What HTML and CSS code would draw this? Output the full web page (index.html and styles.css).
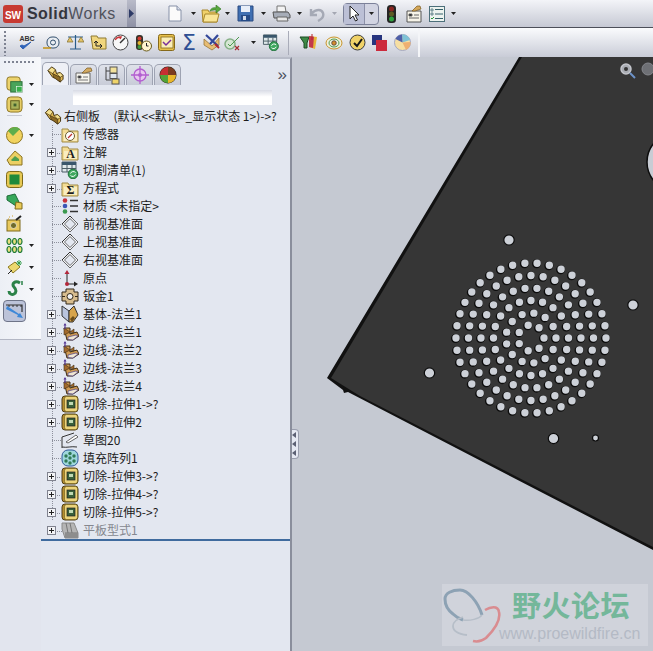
FILE: index.html
```html
<!DOCTYPE html>
<html lang="zh">
<head>
<meta charset="utf-8">
<title>SolidWorks</title>
<link rel="stylesheet" href="styles.css">
</head>
<body>
<svg class="defs" width="0" height="0">
  <defs>
    <symbol id="part" viewBox="0 0 18 18"><path d="M1 5 5 1l4 3 1 4 4-1 3 3v4l-3 3-5-4-3-1z" fill="#e3bb55" stroke="#3d2c0c"/><path d="M5 1 9 4 6 8 1 5zM10 8l4-1 3 3-3 2z" fill="#f4e08f" stroke="#3d2c0c" stroke-width=".7"/><path d="M6 8 7 12l7 5v-5z" fill="#8c6a26" stroke="#3d2c0c" stroke-width=".7"/></symbol>
    <symbol id="folder" viewBox="0 0 18 18"><path d="M1 4h6l1 2h9v11H1z" fill="#f3dc94" stroke="#a08a45"/><path d="M3 8h13v8H3z" fill="#f9edc0"/></symbol>
    <symbol id="sensor" viewBox="0 0 18 18"><use href="#folder"/><circle cx="9" cy="11" r="4.5" fill="#fff" stroke="#6b5b2a"/><path d="m7 13 4-4" stroke="#b33" stroke-width="1.2"/></symbol>
    <symbol id="cutlist" viewBox="0 0 18 18"><path d="M1 1h14v10H1z" fill="#dfe8ea" stroke="#4b5d66"/><path d="M1 1h14v3H1z" fill="#39566b"/><path d="M6 4v7M11 4v7M1 7.500h14" stroke="#4b5d66"/><circle cx="12" cy="13" r="4.800" fill="#3fa85f" stroke="#1f6f3a"/><path d="M9.500 12.500a3 3 0 0 1 5-1M14.500 13.500a3 3 0 0 1-5 1" fill="none" stroke="#fff"/></symbol>
    <symbol id="material" viewBox="0 0 18 18"><circle cx="4" cy="3.500" r="2.300" fill="#c8323a"/><circle cx="4" cy="9" r="2.300" fill="#3a55b5"/><circle cx="4" cy="14.500" r="2.300" fill="#3b9a50"/><path d="M9 3.500h8M9 9h8M9 14.500h8" stroke="#333" stroke-width="1.400"/></symbol>
    <symbol id="plane" viewBox="0 0 18 18"><path d="m9 1 8 8-8 8-8-8zM3.500 9 9 14.500 14.500 9 9 3.500z" fill="#f2f3f6" stroke="#444" stroke-width=".8"/><path d="m1 9 8-8 2 2" fill="none" stroke="#222" stroke-width=".8"/></symbol>
    <symbol id="origin" viewBox="0 0 18 18"><path d="M6 3v12h9" fill="none" stroke="#222"/><path d="m6 1 2.500 4h-5z" fill="#b3263a"/><path d="m17 15-4 2.500v-5z" fill="#222"/><circle cx="6" cy="15" r="2" fill="#b3263a"/></symbol>
    <symbol id="sheet" viewBox="0 0 18 18"><path d="M5 2h8v3h4v9h-4v3H5v-3H1V5h4z" fill="#d8bd8f" stroke="#33281a"/><circle cx="9" cy="9.500" r="3" fill="#f1f1f1" stroke="#33281a"/><path d="M1 9.500h3M14 9.500h3" stroke="#33281a"/></symbol>
    <symbol id="base" viewBox="0 0 18 18"><path d="M1 1 8 6v11L1 11z" fill="#b9c4de" stroke="#333"/><path d="m8 6 5-5 4 9-5 7H8z" fill="#d7a44c" stroke="#333"/><path d="m9 14 3-3 2 2-3 4z" fill="#6a4c1a"/></symbol>
    <symbol id="edge" viewBox="0 0 18 18"><path d="M3 5h6v6l7-2 2 4-6 4H6z" fill="#cf9a52" stroke="#3c2b14"/><path d="m3 5 6 4-6 3zM9 9l4-3v4z" fill="#a36a2c" stroke="#3c2b14" stroke-width=".6"/><path d="M4 6V1" stroke="#5a3c96" stroke-width="1.200"/><path d="M2.500 2.500 4 0l1.500 2.500z" fill="#5a3c96"/><path d="m7 14 8-2 2 1-5 4-5-.5z" fill="#efe6d2" stroke="#4b3f8a" stroke-width=".7"/></symbol>
    <symbol id="cut" viewBox="0 0 18 18"><rect x="1" y="1" width="16" height="16" rx="3" fill="#b58e30" stroke="#4e3d14"/><rect x="3.500" y="1.500" width="13" height="15" rx="2" fill="#ecd47a" stroke="#6a5818" stroke-width=".6"/><rect x="6" y="5" width="8" height="8" fill="#385f3a" stroke="#222" stroke-width=".7"/><rect x="8" y="7" width="4" height="3" fill="#c0d8b4"/></symbol>
    <symbol id="sketch" viewBox="0 0 18 18"><path d="M1 17V6l12-4" fill="none" stroke="#333"/><path d="M1 16c5 1 9-1 15 0" fill="none" stroke="#333"/><path d="m5 11 10-7 2 2-10 6z" fill="#fff" stroke="#444" stroke-width=".8"/></symbol>
    <symbol id="pattern" viewBox="0 0 18 18"><rect x="1" y="1" width="16" height="16" rx="6" fill="#9ed7dc" stroke="#2f5a9a"/><g fill="#2f7a55"><circle cx="9" cy="4.500" r="1.700"/><circle cx="5" cy="7" r="1.700"/><circle cx="13" cy="7" r="1.700"/><circle cx="9" cy="9" r="1.700"/><circle cx="5" cy="12" r="1.700"/><circle cx="13" cy="12" r="1.700"/><circle cx="9" cy="14" r="1.700"/></g></symbol>
    <symbol id="flat" viewBox="0 0 18 18"><path d="M1 2h12l4 10v5H4L1 8z" fill="#b5b5b5" stroke="#8a8a8a"/><path d="M5 2l2 10M9 2l2 10M4 12h13" stroke="#777" fill="none"/><path d="M4 12h13v5H4z" fill="#8d8d8d"/></symbol>
    <symbol id="caret" viewBox="0 0 5 3"><path d="M0 0h5L2.500 3z" fill="#222"/></symbol>
    <symbol id="extr" viewBox="0 0 18 18"><rect x="1" y="1" width="14" height="14" rx="3" fill="#ecd36e" stroke="#8c7420"/><rect x="5" y="6" width="12" height="11" fill="#49a45a" stroke="#2c6e3a"/><rect x="11" y="11" width="6" height="6" fill="#38b04c" stroke="#fff" stroke-width=".6"/></symbol>
    <symbol id="rev" viewBox="0 0 18 18"><rect x="1" y="1" width="16" height="16" rx="4" fill="#e8cf68" stroke="#8c7420"/><rect x="5" y="5" width="9" height="9" fill="#a9b25a" stroke="#5e5a1c"/><rect x="8" y="8" width="3" height="3" fill="#41622e"/></symbol>
  </defs>
</svg>

<header class="bar-top">
  <div class="logo">
    <svg class="logo-mark" viewBox="0 0 20 18"><rect width="20" height="18" rx="3" fill="#c73a32"/><text x="10" y="14" text-anchor="middle" class="logo-sw">SW</text></svg>
    <span class="logo-text"><b>Solid</b>Works</span>
  </div>
  <div class="logo-arrow"><svg width="5" height="9" viewBox="0 0 5 9"><path d="m0 0 5 4.500L0 9z" fill="#2d3a66"/></svg></div>
  <div class="top-icons">
    <span class="b w28"><svg width="14" height="17" viewBox="0 0 14 17"><path d="M1 1h8l4 4v11H1z" fill="#fbfbfb" stroke="#8791a8"/><path d="M9 1v4h4" fill="#d8deea" stroke="#8791a8"/></svg></span>
    <span class="c"><svg width="5" height="3"><use href="#caret"/></svg></span>
    <span class="b w25"><svg width="20" height="18" viewBox="0 0 20 18"><path d="M1 5h6l1 2h8v10H2z" fill="#f0d16a" stroke="#a8872c"/><path d="m2 17 2-8h14l-2 8z" fill="#f9e596" stroke="#a8872c"/><path d="M9 6c1-3 4-4 6-3V0l5 4-5 4V5c-2 0-4 0-6 1z" fill="#58a83e" stroke="#2f7320" stroke-width=".6"/></svg></span>
    <span class="c"><svg width="5" height="3"><use href="#caret"/></svg></span>
    <span class="b w27"><svg width="17" height="17" viewBox="0 0 17 17"><path d="M1 1h15v15H1z" fill="#3f6fb2" stroke="#2b4a80"/><path d="M4 1h9v6H4z" fill="#e8eef8"/><path d="M4 10h9v6H4z" fill="#254a86"/><path d="M6 11h3v4H6z" fill="#cfd9ea"/></svg></span>
    <span class="c"><svg width="5" height="3"><use href="#caret"/></svg></span>
    <span class="b w27"><svg width="19" height="17" viewBox="0 0 19 17"><path d="M5 1h8l1 6H5z" fill="#f3f3f3" stroke="#777"/><path d="M1 7h15l2 3v3H2z" fill="#a7adb8" stroke="#555"/><path d="M5 12h10l1 4H5z" fill="#e7e7e7" stroke="#666"/></svg></span>
    <span class="c"><svg width="5" height="3"><use href="#caret"/></svg></span>
    <span class="b w26"><svg width="18" height="16" viewBox="0 0 18 16"><path d="M3 3v6h6M3 9c2-5 10-7 12-2 1 3-1 6-5 8" fill="none" stroke="#a5a9b5" stroke-width="2.400"/></svg></span>
    <span class="c c-off"><svg width="5" height="3"><path d="M0 0h5L2.500 3z" fill="#a4a7b2"/></svg></span>
    <span class="select">
      <span class="select-main"><svg width="11" height="17" viewBox="0 0 11 17"><path d="M1 1v13l3-3 2.500 5 2-1-2.500-5h4z" fill="#fff" stroke="#222"/></svg></span>
      <span class="select-drop"><svg width="5" height="3"><use href="#caret"/></svg></span>
    </span>
    <span class="b w24"><svg width="9" height="18" viewBox="0 0 9 18"><rect width="9" height="18" rx="3.500" fill="#252525"/><circle cx="4.500" cy="4" r="2.500" fill="#8a2622"/><circle cx="4.500" cy="9" r="2.500" fill="#5c5a24"/><circle cx="4.500" cy="14" r="2.500" fill="#2fa23f"/></svg></span>
    <span class="b w22"><svg width="16" height="18" viewBox="0 0 16 18"><path d="M1 6h14v11H1z" fill="#f6f3e8" stroke="#555"/><path d="M3 9h3v2H3zM3 13h10M8 10h5" stroke="#666"/><path d="M6 6l5-5h3l1 3-6 2z" fill="#d4a75a" stroke="#7a5a20" stroke-width=".7"/></svg></span>
    <span class="b w23"><svg width="16" height="16" viewBox="0 0 16 16"><rect x=".5" y=".5" width="15" height="15" fill="#edf3ef" stroke="#4c6f7a"/><path d="M6 3.500h8M6 8h8M6 12.500h8" stroke="#34606a"/><path d="M2 3h2v2H2zM2 7h2v2H2z" fill="none" stroke="#34606a" stroke-width=".7"/><path d="m2 12 1 1 2-2" fill="none" stroke="#2a9a3a"/></svg></span>
    <span class="c c-last"><svg width="5" height="3"><use href="#caret"/></svg></span>
  </div>
</header>

<div class="bar-second">
  <div class="second-icons">
    <span class="grip"></span>
    <span class="s w25"><svg width="18" height="17" viewBox="0 0 18 17"><text x="9" y="7" text-anchor="middle" class="abc">ABC</text><path d="m2 12 3 3 8-7-7 4-2-1z" fill="#2f63b8" stroke="#2f63b8"/></svg></span>
    <span class="s w24"><svg width="18" height="16" viewBox="0 0 18 16"><rect x="5" y="2" width="12" height="11" rx="5" fill="#e9edf2" stroke="#33506e"/><circle cx="11" cy="7.500" r="2.500" fill="none" stroke="#33506e"/><path d="M1 13h8" stroke="#c5951f" stroke-width="1.600"/></svg></span>
    <span class="s w24"><svg width="17" height="17" viewBox="0 0 17 17"><path d="M8.500 1v14M1 3h15M3 15h11" stroke="#2a5d8a" stroke-width="1.200"/><path d="M0 8h6L3 3zM11 8h6l-3-5z" fill="#e3c46a" stroke="#7c6a2a" stroke-width=".7"/></svg></span>
    <span class="s w22"><svg width="17" height="15" viewBox="0 0 17 15"><path d="M1 1h6l1 2h8v11H3z" fill="#f0d67e" stroke="#8f7a32"/><path d="M6 6v5h6M10 9l2 2-2 2M4 8l2-2 2 2" fill="none" stroke="#222"/></svg></span>
    <span class="s w22"><svg width="17" height="17" viewBox="0 0 17 17"><circle cx="8.500" cy="8.500" r="7.500" fill="#f7f7f7" stroke="#444"/><path d="M3 6a6 6 0 0 1 6-3l-1 2" fill="none" stroke="#c9353a" stroke-width="1.500"/><path d="m8 9 5-5" stroke="#333" stroke-width="1.400"/></svg></span>
    <span class="s w24"><svg width="17" height="18" viewBox="0 0 17 18"><rect x="1" y="1" width="7" height="15" rx="3" fill="#34322a"/><circle cx="4.500" cy="4.500" r="2" fill="#d13b30"/><circle cx="4.500" cy="9" r="2" fill="#e0b22f"/><circle cx="4.500" cy="13" r="2" fill="#3f9a3e"/><circle cx="11.500" cy="12" r="5" fill="#fff6cf" stroke="#6a5a1a"/><path d="M11.500 9v3h2" stroke="#222" fill="none"/></svg></span>
    <span class="s w22"><svg width="17" height="17" viewBox="0 0 17 17"><rect x=".5" y=".5" width="16" height="16" rx="2" fill="#e8c14c" stroke="#86691a"/><rect x="3" y="3" width="12" height="11" fill="#fbeeb7" stroke="#86691a" stroke-width=".8"/><path d="m5 8 3 3 5-5" fill="none" stroke="#7a2f9a" stroke-width="1.500"/></svg></span>
    <span class="s w24 sigma">Σ</span>
    <span class="s w21"><svg width="18" height="17" viewBox="0 0 18 17"><path d="m1 5 8 7 7-8v7l-7 5-8-5z" fill="#e7bd75" stroke="#8e6c2b" stroke-width=".7"/><path d="M3 1l12 11M15 1 7 10" stroke="#34489a" stroke-width="2.200"/><path d="m12 10 4 4" stroke="#b5232c" stroke-width="1.800"/></svg></span>
    <span class="s w20"><svg width="17" height="16" viewBox="0 0 17 16"><circle cx="6" cy="9" r="5" fill="#d5e6d3" stroke="#85b085" stroke-width="1.500"/><path d="m4 9 2 2 9-9" fill="none" stroke="#4f9a50"/><path d="m11 11 4 4m0-4-4 4" stroke="#a52e33" stroke-width="1.200"/></svg></span>
    <span class="c c-second"><svg width="5" height="3"><use href="#caret"/></svg></span>
    <span class="s w19 table-btn"><svg width="18" height="17"><use href="#cutlist"/></svg></span>
    <span class="sep"></span>
    <span class="s w26"><svg width="19" height="17" viewBox="0 0 19 17"><path d="M1 3h9l-2 6v5H5V9z" fill="#3e8a46" stroke="#1c4a25"/><path d="m10 2 8 1-2 12-6-2z" fill="#e6b73a"/><path d="m10 2 5 .7L14 14l-4-1z" fill="#c33a4c"/><path d="M13 0v6" stroke="#b5232c"/></svg></span>
    <span class="s w25"><svg width="18" height="14" viewBox="0 0 18 14"><ellipse cx="9" cy="7" rx="8" ry="6" fill="#f1f2de" stroke="#c9952c"/><ellipse cx="9" cy="7" rx="5" ry="4" fill="none" stroke="#4d9a4f"/><circle cx="9" cy="7" r="2.300" fill="#d58b2e" stroke="#333" stroke-width=".7"/></svg></span>
    <span class="s w23"><svg width="17" height="17" viewBox="0 0 17 17"><circle cx="8.500" cy="8.500" r="7.500" fill="#f0d268" stroke="#3a3a3a"/><path d="m5 9 3 3 5-7" fill="none" stroke="#151515" stroke-width="2"/></svg></span>
    <span class="s w21"><svg width="15" height="16" viewBox="0 0 15 16"><rect width="10" height="10" fill="#27347e"/><rect x="4" y="5" width="11" height="11" fill="#cc2a3c"/></svg></span>
    <span class="s w25"><svg width="17" height="17" viewBox="0 0 17 17"><circle cx="8.500" cy="8.500" r="8" fill="#f7dfa2" stroke="#a3a7c3"/><path d="M8.500 8.500 16 6a8 8 0 0 0-8-5.500z" fill="#7fc2d6"/><path d="M8.500 8.500 1.500 5a8 8 0 0 1 6.500-4.500z" fill="#4e5fa8"/><path d="M8.500 8.500 12 16a8 8 0 0 0 4.500-8z" fill="#eeb071"/></svg></span>
  </div>
  <div class="second-rest"></div>
</div>

<main class="work">
  <aside class="palette-col">
    <nav class="palette">
      <div class="pal-grip"></div>
      <div class="pal-item pal-first"><svg width="17" height="17"><use href="#extr"/></svg><svg class="pal-caret" width="5" height="3"><use href="#caret"/></svg></div>
      <div class="pal-item pal-gap"><svg width="17" height="17"><use href="#rev"/></svg><svg class="pal-caret" width="5" height="3"><use href="#caret"/></svg></div>
      <div class="pal-item"><svg width="17" height="17" viewBox="0 0 17 17"><circle cx="8.500" cy="8.500" r="8" fill="#f1d35f" stroke="#8f7620"/><path d="M2 4a8 8 0 0 1 12-2L7 9z" fill="#5fae4c"/></svg><svg class="pal-caret" width="5" height="3"><use href="#caret"/></svg></div>
      <div class="pal-item"><svg width="17" height="17" viewBox="0 0 17 17"><path d="m1 11 8-9 7 6v8H4z" fill="#ecd064" stroke="#8b7320"/><path d="m5 11 4-4 4 3v2H6z" fill="#4f9f50"/></svg></div>
      <div class="pal-item"><svg width="17" height="17" viewBox="0 0 17 17"><rect x=".5" y=".5" width="16" height="16" rx="3" fill="#e7c954" stroke="#7f6a1a"/><rect x="3.500" y="3.500" width="10" height="10" fill="#1f8a3a"/></svg></div>
      <div class="pal-item"><svg width="17" height="17" viewBox="0 0 17 17"><path d="M1 3 9 1l4 8-3 4-9-6z" fill="#36a85a" stroke="#1f6a38"/><path d="m10 9 6 1v6H9z" fill="#eacb58" stroke="#7f6a1a"/></svg></div>
      <div class="pal-item"><svg width="17" height="17" viewBox="0 0 17 17"><rect x="1" y="5" width="13" height="11" fill="#e9c95e" stroke="#7f6a1a"/><circle cx="7.500" cy="10.500" r="3" fill="#6e6a2b" stroke="#fff" stroke-width=".6"/><path d="m10 5 5-4" stroke="#222" stroke-width="2"/><path d="M3 2h1M6 1h1M2 4h1" stroke="#d0a02a"/></svg></div>
      <div class="pal-item"><svg width="17" height="15" viewBox="0 0 17 15"><g fill="#e9e07e" stroke="#1f7a3a" stroke-width="1.200"><ellipse cx="3" cy="3.500" rx="2" ry="3"/><ellipse cx="8.500" cy="3.500" rx="2" ry="3"/><ellipse cx="14" cy="3.500" rx="2" ry="3"/><ellipse cx="3" cy="11.500" rx="2" ry="3"/><ellipse cx="8.500" cy="11.500" rx="2" ry="3"/><ellipse cx="14" cy="11.500" rx="2" ry="3"/></g></svg><svg class="pal-caret" width="5" height="3"><use href="#caret"/></svg></div>
      <div class="pal-item"><svg width="17" height="17" viewBox="0 0 17 17"><path d="m2 8 7-5 5 5-7 6z" fill="#ecd86f" stroke="#8e7a20"/><path d="M2 15 6 11" stroke="#222"/><path d="M13 1v6M10 4h6M11 2l4 4M15 2l-4 4" stroke="#2f9a45" stroke-width=".9"/></svg><svg class="pal-caret" width="5" height="3"><use href="#caret"/></svg></div>
      <div class="pal-item"><svg width="16" height="18" viewBox="0 0 16 18"><path d="M13 3c-5-3-9 1-6 4s2 6 0 7-5 0-5-3" fill="none" stroke="#2b8248" stroke-width="3"/><path d="M15 1v4" stroke="#2b8248" stroke-width="1.500"/></svg><svg class="pal-caret" width="5" height="3"><use href="#caret"/></svg></div>
      <div class="pal-item pal-active"><svg width="19" height="17" viewBox="0 0 19 17"><path d="M1 2h16v7" fill="none" stroke="#333" stroke-width="1.200"/><path d="M4 2v2M8 2v2M12 2v2M16 2v2" stroke="#333"/><path d="m1 6 12 6-1 2 6 1-3-5-1 1L2 3z" fill="#3d88d8"/></svg></div>
    </nav>
  </aside>

  <section class="panel">
    <div class="tabs">
      <span class="tab tab-on"><svg width="19" height="17"><use href="#part"/></svg></span>
      <span class="tab"><svg width="19" height="18" viewBox="0 0 19 18"><path d="M2 7h14v10H2z" fill="#f6f5ee" stroke="#666"/><path d="M4 10h3v2H4zM4 14h10M9 11h5" stroke="#777"/><path d="m8 7 5-5h4l1 3-7 2z" fill="#d2aa62" stroke="#7a5a20" stroke-width=".7"/></svg></span>
      <span class="tab"><svg width="16" height="19" viewBox="0 0 16 19"><path d="M2 1v13h5M2 5h4" fill="none" stroke="#444"/><rect x="6" y="1" width="7" height="6" fill="#f2e29c" stroke="#555"/><rect x="6" y="7.500" width="7" height="5" fill="#dfe7f0" stroke="#555"/><rect x="8" y="13" width="7" height="5" fill="#efd469" stroke="#555"/></svg></span>
      <span class="tab"><svg width="18" height="18" viewBox="0 0 18 18"><circle cx="9" cy="9" r="6" fill="#e8c8ef" stroke="#b25fd0" stroke-width="1.300"/><path d="M9 0v18M0 9h18" stroke="#b25fd0" stroke-width="1.300"/><circle cx="9" cy="9" r="2" fill="#b25fd0"/></svg></span>
      <span class="tab"><svg width="18" height="18" viewBox="0 0 18 18"><circle cx="9" cy="9" r="8.500" fill="#282218"/><path d="M1 9a8 8 0 0 1 8-8v8z" fill="#c72f32"/><path d="M9 1a8 8 0 0 1 8 8H9z" fill="#7b3c20"/><path d="M1 9h8v8a8 8 0 0 1-8-8z" fill="#52a338"/><path d="M9 9h8a8 8 0 0 1-8 8z" fill="#e9b72c"/></svg></span>
      <span class="more">»</span>
    </div>
    <div class="filter"></div>
    <div class="tree">
      <div class="row row-root"><svg class="ico-root" width="18" height="17"><use href="#part"/></svg><span class="label">右侧板 &nbsp; &nbsp; (默认&lt;&lt;默认&gt;_显示状态 1&gt;)-&gt;?</span></div>
      <div class="row"><i class="none"></i><svg class="ico" width="18" height="18"><use href="#sensor"/></svg><span class="label">传感器</span></div>
      <div class="row"><i class="exp"></i><svg class="ico" width="18" height="18" viewBox="0 0 18 18"><use href="#folder"/><text x="9.500" y="15" text-anchor="middle" class="ico-t">A</text></svg><span class="label">注解</span></div>
      <div class="row"><i class="exp"></i><svg class="ico" width="18" height="18"><use href="#cutlist"/></svg><span class="label">切割清单(1)</span></div>
      <div class="row"><i class="exp"></i><svg class="ico" width="18" height="18" viewBox="0 0 18 18"><use href="#folder"/><text x="9.500" y="15" text-anchor="middle" class="ico-t">Σ</text></svg><span class="label">方程式</span></div>
      <div class="row"><i class="none"></i><svg class="ico" width="18" height="18"><use href="#material"/></svg><span class="label">材质 &lt;未指定&gt;</span></div>
      <div class="row"><i class="none"></i><svg class="ico" width="18" height="18"><use href="#plane"/></svg><span class="label">前视基准面</span></div>
      <div class="row"><i class="none"></i><svg class="ico" width="18" height="18"><use href="#plane"/></svg><span class="label">上视基准面</span></div>
      <div class="row"><i class="none"></i><svg class="ico" width="18" height="18"><use href="#plane"/></svg><span class="label">右视基准面</span></div>
      <div class="row"><i class="none"></i><svg class="ico" width="18" height="18"><use href="#origin"/></svg><span class="label">原点</span></div>
      <div class="row"><i class="none"></i><svg class="ico" width="18" height="18"><use href="#sheet"/></svg><span class="label">钣金1</span></div>
      <div class="row"><i class="exp"></i><svg class="ico" width="18" height="18"><use href="#base"/></svg><span class="label">基体-法兰1</span></div>
      <div class="row"><i class="exp"></i><svg class="ico" width="18" height="18"><use href="#edge"/></svg><span class="label">边线-法兰1</span></div>
      <div class="row"><i class="exp"></i><svg class="ico" width="18" height="18"><use href="#edge"/></svg><span class="label">边线-法兰2</span></div>
      <div class="row"><i class="exp"></i><svg class="ico" width="18" height="18"><use href="#edge"/></svg><span class="label">边线-法兰3</span></div>
      <div class="row"><i class="exp"></i><svg class="ico" width="18" height="18"><use href="#edge"/></svg><span class="label">边线-法兰4</span></div>
      <div class="row"><i class="exp"></i><svg class="ico" width="18" height="18"><use href="#cut"/></svg><span class="label">切除-拉伸1-&gt;?</span></div>
      <div class="row"><i class="exp"></i><svg class="ico" width="18" height="18"><use href="#cut"/></svg><span class="label">切除-拉伸2</span></div>
      <div class="row"><i class="none"></i><svg class="ico" width="18" height="18"><use href="#sketch"/></svg><span class="label">草图20</span></div>
      <div class="row"><i class="none"></i><svg class="ico" width="18" height="18"><use href="#pattern"/></svg><span class="label">填充阵列1</span></div>
      <div class="row"><i class="exp"></i><svg class="ico" width="18" height="18"><use href="#cut"/></svg><span class="label">切除-拉伸3-&gt;?</span></div>
      <div class="row"><i class="exp"></i><svg class="ico" width="18" height="18"><use href="#cut"/></svg><span class="label">切除-拉伸4-&gt;?</span></div>
      <div class="row"><i class="exp"></i><svg class="ico" width="18" height="18"><use href="#cut"/></svg><span class="label">切除-拉伸5-&gt;?</span></div>
      <div class="row row-off"><i class="exp"></i><svg class="ico" width="18" height="18"><use href="#flat"/></svg><span class="label">平板型式1</span></div>
    </div>
  </section>

  <section class="view">
    <svg class="scene" viewBox="292 57 361 594" width="361" height="594">
      <path d="M519 57 327 378l16 12 1 3 4-1 305 158V57z" fill="#111"/>
      <path d="M522 57 331 378l29 18 293 151V57z" fill="#363636"/>
      <circle cx="676" cy="162" r="29" fill="#c8ccd4" stroke="#0d0d0d" stroke-width="1.500"/>
      <g fill="none" stroke="#0c0c0c" stroke-width="9" stroke-linecap="round" stroke-dasharray="0 1" transform="translate(-.5 .5)">
        <circle cx="531" cy="338" r="75" pathLength="38"/>
        <circle cx="531" cy="338" r="62.500" pathLength="32"/>
        <circle cx="531" cy="338" r="50" pathLength="26"/>
        <circle cx="531" cy="338" r="37.500" pathLength="20"/>
        <circle cx="531" cy="338" r="25" pathLength="13"/>
        <circle cx="531" cy="338" r="13" pathLength="7"/>
      </g>
      <g fill="none" stroke="#cdd1d8" stroke-width="7.400" stroke-linecap="round" stroke-dasharray="0 1">
        <circle cx="531" cy="338" r="75" pathLength="38"/>
        <circle cx="531" cy="338" r="62.500" pathLength="32"/>
        <circle cx="531" cy="338" r="50" pathLength="26"/>
        <circle cx="531" cy="338" r="37.500" pathLength="20"/>
        <circle cx="531" cy="338" r="25" pathLength="13"/>
        <circle cx="531" cy="338" r="13" pathLength="7"/>
      </g>
      <g fill="#cdd1d8" stroke="#0c0c0c" stroke-width="1.200">
        <circle cx="509" cy="240" r="5.200"/>
        <circle cx="633" cy="305" r="5.200"/>
        <circle cx="429.500" cy="373" r="5.200"/>
        <circle cx="553.500" cy="438.500" r="5.200"/>
        <circle cx="595.500" cy="438" r="3"/>
      </g>
      <g transform="translate(620 63)"><circle cx="6" cy="6" r="5" fill="#a9acb3" stroke="#c4c6cc" stroke-width="1.500"/><circle cx="6" cy="6" r="2" fill="#333"/><path d="m10 10 5 5" stroke="#6d93c9" stroke-width="2"/></g>
      <circle cx="648" cy="69" r="6" fill="#6e7075" stroke="#85878d"/>
    </svg>
    <button class="splitter" type="button"><i></i><i></i><i></i></button>
    <div class="watermark">
      <svg class="wm-mark" viewBox="0 0 60 62" width="60" height="62"><path d="M40 31C36 18 26 6 18 6 10 6 3 9 3 15c0 7 4 12 8 15 3 3 7 5 10 6" fill="none" stroke="#8da2b4" stroke-width="3"/><path d="M43 26c5-3 13-5 14 2 2 9-6 19-13 26-4 3-9 4-13 3" fill="none" stroke="#d98c90" stroke-width="2.600"/><path d="M21 33c-6 2-10 5-10 9 0 5 5 8 14 9" fill="none" stroke="#b6bec8" stroke-width="1.800"/><path d="M21 36c7 1 16-1 19-5" fill="none" stroke="#b6bec8" stroke-width="1.400"/></svg>
      <div class="wm-text">野火论坛</div>
      <div class="wm-url">www.proewildfire.cn</div>
    </div>
  </section>
</main>
</body>
</html>
```

FILE: styles.css
```css
* { box-sizing: border-box; }
html, body { margin: 0; padding: 0; }
body {
  width: 653px;
  height: 651px;
  overflow: hidden;
  background: #c5c9d2;
  font-family: "Noto Sans CJK SC", "Liberation Sans", sans-serif;
  display: flex;
  flex-direction: column;
}
.defs { position: absolute; }

/* top bar */
.bar-top {
  height: 28px;
  flex: none;
  display: flex;
  align-items: stretch;
  background: linear-gradient(#f3f4f8, #c6c9d4);
  border-bottom: 1px solid #4c4f59;
}
.logo {
  width: 127px;
  display: flex;
  align-items: center;
  gap: 4px;
  padding-left: 3px;
  background: linear-gradient(#d4d5de, #b3b5c3);
}
.logo-mark { width: 20px; height: 18px; }
.logo-sw { font: bold 10px "Liberation Sans", sans-serif; fill: #fff; }
.logo-text {
  font: 16px "Liberation Sans", sans-serif;
  letter-spacing: .45px;
  color: #50525c;
}
.logo-text b { color: #34353d; }
.logo-arrow {
  width: 9px;
  display: flex;
  align-items: center;
  justify-content: center;
  background: linear-gradient(#b9bbc9, #8e91a5);
}
.top-icons {
  display: flex;
  align-items: center;
  padding-left: 25px;
}
.b, .s { display: flex; align-items: center; justify-content: center; flex: none; }
.w19 { width: 19px; } .w20 { width: 20px; } .w21 { width: 21px; } .w22 { width: 22px; }
.w23 { width: 23px; } .w24 { width: 24px; } .w25 { width: 25px; } .w26 { width: 26px; }
.w27 { width: 27px; } .w28 { width: 28px; }
.c { width: 9px; display: flex; justify-content: center; align-items: center; flex: none; }
.c-off { margin-right: 4px; }
.c-last { margin-left: 1px; }
.select {
  width: 36px;
  height: 22px;
  display: flex;
  border: 1px solid #7c8199;
  border-radius: 4px;
  background: #d2d4e2;
}
.select-main {
  flex: 1;
  display: flex;
  align-items: center;
  justify-content: center;
  background: #bcc0d6;
  border-right: 1px solid #8c90a8;
}
.select-drop { width: 13px; display: flex; align-items: center; justify-content: center; }

/* second bar */
.bar-second {
  height: 29px;
  flex: none;
  display: flex;
  background: linear-gradient(#fafbfd, #c9ccd7);
}
.second-icons {
  width: 420px;
  display: flex;
  align-items: center;
  padding-left: 1px;
  border-right: 2px solid #f4f5f8;
}
.grip {
  width: 10px;
  height: 26px;
  margin: 0 1px 0 2px;
  background: radial-gradient(circle, #7e8392 0.8px, transparent 1.2px) 0 0 / 4px 4px repeat-y;
}
.sep { width: 1px; height: 24px; background: #a9acb9; margin: 0 6px 0 8px; flex: none; }
.sigma { font: 22px "DejaVu Sans", sans-serif; color: #2e4f94; line-height: 1; }
.abc { font: bold 7px "Liberation Sans", sans-serif; fill: #333; }
.c-second { width: 10px; margin-left: 6px; }
.table-btn { margin-left: 3px; }
.second-rest { flex: 1; }

/* working area */
.work { flex: 1; display: flex; min-height: 0; }
.palette-col {
  width: 41px;
  flex: none;
  background: #e2e5ee;
}
.palette {
  height: 283px;
  padding: 3px 0 0 3px;
  background: linear-gradient(90deg, #eceff5, #f7f8fb);
  border-bottom: 1px solid #b3b7c4;
}
.pal-grip {
  width: 32px;
  height: 4px;
  margin-bottom: 9px;
  background: radial-gradient(circle, #7e8392 0.8px, transparent 1.1px) 0 0 / 4px 4px repeat-x;
}
.pal-item {
  height: 22px;
  width: 23px;
  display: flex;
  align-items: center;
  justify-content: center;
  position: relative;
}
.pal-first { margin-bottom: -2px; }
.pal-gap { margin-bottom: 9px; box-shadow: 0 5px 0 -4px #c7cad4; }
.pal-caret { position: absolute; left: 26px; top: 10px; }
.pal-active {
  border: 1px solid #6e7488;
  border-radius: 4px;
  background: #bcc3d9;
}

/* feature panel */
.panel {
  width: 251px;
  flex: none;
  background: #e3e7f0;
  border-right: 2px solid #8a8e9c;
  border-top: 2px solid #b8bcc8;
  display: flex;
  flex-direction: column;
}
.tabs {
  height: 26px;
  padding: 5px 0 0 1px;
  display: flex;
  align-items: flex-end;
  gap: 1px;
  position: relative;
}
.tab {
  width: 27px;
  height: 21px;
  display: flex;
  align-items: center;
  justify-content: center;
  background: linear-gradient(#dfe2ea, #c8ccd8);
  border: 1px solid #9ea3b2;
  border-bottom: 0;
  border-radius: 5px 5px 0 0;
}
.tab-on { background: #eef0f6; height: 23px; }
.more {
  margin-left: auto;
  margin-right: 3px;
  align-self: center;
  font: 17px "Liberation Sans", sans-serif;
  color: #4c5060;
}
.filter {
  height: 15px;
  width: 199px;
  margin: 5px 0 0 32px;
  flex: none;
  background: linear-gradient(#d8dbe5, #fff 45%, #fff);
}
.tree {
  margin-top: 2px;
  height: 434px;
  flex: none;
  border-bottom: 2px solid #3f6b9e;
  position: relative;
}
.tree::before {
  content: "";
  position: absolute;
  left: 11px;
  top: 9px;
  bottom: 19px;
  border-left: 1px dotted #8d909c;
}
.row {
  height: 18px;
  display: flex;
  align-items: center;
  padding-left: 6px;
  font-size: 12px;
  color: #1c1c1c;
  white-space: nowrap;
  position: relative;
}
.row i { display: block; width: 9px; height: 9px; flex: none; position: relative; z-index: 1; }
.row i::after {
  content: "";
  position: absolute;
  left: 9px;
  top: 4px;
  width: 5px;
  border-top: 1px dotted #8d909c;
}
.row i.none::before {
  content: "";
  position: absolute;
  left: 5px;
  top: 4px;
  width: 9px;
  border-top: 1px dotted #8d909c;
}
.row i.none::after { display: none; }
.row i.exp {
  border: 1px solid #80838f;
  background:
    linear-gradient(#222, #222) center / 5px 1px no-repeat,
    linear-gradient(#222, #222) center / 1px 5px no-repeat,
    #f2f3f6;
}
.ico { margin: 0 4px 0 5px; flex: none; }
.row-root { padding-left: 3px; }
.ico-root { margin-right: 2px; flex: none; position: relative; background: #e3e7f0; }
.row-off { color: #85878f; }
.label { line-height: 18px; }
.ico-t { font: bold 12px "Liberation Serif", serif; fill: #1c1c1c; }

/* graphics area */
.view { flex: 1; position: relative; overflow: hidden; background: #c5c9d2; }
.scene { display: block; }
.splitter {
  position: absolute;
  left: -2px;
  top: 372px;
  width: 9px;
  height: 30px;
  padding: 0;
  display: flex;
  flex-direction: column;
  align-items: center;
  justify-content: center;
  gap: 3px;
  background: #e5e8f2;
  border: 1px solid #9a9eae;
  border-left: 0;
  border-radius: 0 4px 4px 0;
}
.splitter i {
  width: 0;
  height: 0;
  border-top: 3px solid transparent;
  border-bottom: 3px solid transparent;
  border-right: 4px solid #5c6074;
}
.watermark {
  position: absolute;
  left: 150px;
  top: 527px;
  width: 206px;
  height: 62px;
  background: rgba(255, 255, 255, .2);
}
.wm-mark { position: absolute; left: 0; top: 0; }
.wm-text {
  position: absolute;
  left: 70px;
  top: 2px;
  font-size: 29px;
  line-height: 36px;
  font-weight: 700;
  letter-spacing: .5px;
  color: #74b79a;
  white-space: nowrap;
}
.wm-url {
  position: absolute;
  left: 57px;
  top: 40px;
  font: 16px/20px "Liberation Sans", sans-serif;
  color: #b4bac5;
  white-space: nowrap;
}
```
